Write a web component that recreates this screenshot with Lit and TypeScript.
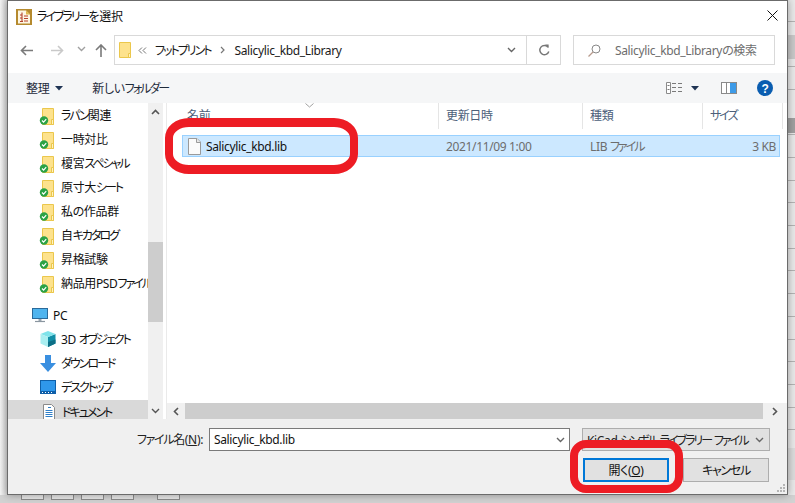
import { LitElement, html, css, svg } from 'lit';
import { customElement } from 'lit/decorators.js';

const folder = (badge = true) => html`
  <svg width="20" height="20" viewBox="0 0 20 20">
    <path d="M3.5 3.5h11v16h-11z" fill="#fde28d" stroke="#ebc74c" />
    <path d="M12.5 14.5h2v5h-2z" fill="#fff2c0" stroke="#ebc74c" />
    ${badge
      ? svg`<circle cx="5" cy="15.500" r="4.200" fill="#2ba245" />
          <path d="M3 15.500l1.600 1.600 2.600-3" fill="none" stroke="#fff" stroke-width="1.200" />`
      : ''}
  </svg>
`;

const chevronDown = (color = '#666') => html`
  <svg width="9" height="6" viewBox="0 0 9 6"><path d="M1 1l3.500 3.500L8 1" fill="none" stroke=${color} stroke-width="1.400" /></svg>
`;

const caret = html`<svg width="8" height="5" viewBox="0 0 8 5"><path d="M0 0h8L4 4.500z" fill="#1f3454" /></svg>`;

// Meiryo/Yu Gothic kana run much narrower than Noto's, so squeeze katakana runs only
const jp = (text: string) =>
  text.split(/([ァ-ヶー]+)/).map((part, i) => (i % 2 ? html`<span class="k">${part}</span>` : part));

const navItems = ['ラパン関連', '一時対比', '榎宮スペシャル', '原寸大シート', '私の作品群', '自キカタログ', '昇格試験', '納品用PSDファイル'];

@customElement('app-root')
export class AppRoot extends LitElement {
  static styles = css`
    :host {
      display: block;
      position: relative;
      width: 795px;
      height: 503px;
      overflow: hidden;
      background: #eeeeee;
      font-family: 'Noto Sans', 'Noto Sans CJK JP', sans-serif;
      font-size: 12px;
      font-feature-settings: 'palt';
      letter-spacing: -0.35px;
      color: #1a1a1a;
    }
    svg { display: block; flex: none; }
    .k { letter-spacing: -2px; }
    .label .k, .btn .k { letter-spacing: -1.3px; }

    .desk { display: flex; height: 495px; }
    .left-strip { width: 7px; background: linear-gradient(90deg, #f4f4f4, #d4d4d4); }
    .right-strip {
      flex: 1;
      background:
        linear-gradient(#a0a0a0, #a0a0a0) 0 118px / 100% 15px no-repeat,
        linear-gradient(#c9c9c9, #c9c9c9) 0 35px / 100% 24px no-repeat,
        linear-gradient(#dcdcdc, #dcdcdc) 0 448px / 100% 32px no-repeat,
        repeating-linear-gradient(#e9e9e9 0 21.7px, #b4b4b4 21.7px 22.7px) 0 -1px;
    }
    .under { display: flex; height: 8px; padding-left: 21px; gap: 7px; background: #d2d2d2; }
    .stub { width: 21px; height: 4px; border: 1px solid #8c8c8c; border-top: 0; background: #e9e9e9; }
    .stub.far { margin-left: 16px; }

    .dialog {
      box-sizing: border-box;
      width: 781px;
      height: 495px;
      border: 1px solid #6b6b6b;
      background: #fff;
      display: flex;
      flex-direction: column;
      box-shadow: 0 0 8px rgba(0, 0, 0, 0.35);
      position: relative;
    }

    .title { height: 32px; display: flex; align-items: center; padding-left: 8px; gap: 5px; flex: none; }
    .title-text { flex: 1; color: #111; position: relative; top: -1px; }
    .close { margin-right: 9px; position: relative; top: -2px; }

    .nav { height: 40px; display: flex; align-items: center; flex: none; padding-left: 12px; }
    .nav .fwd { margin-left: 18px; }
    .nav .hist { margin-left: 13px; margin-top: -8px; }
    .nav .up { margin-left: 9px; }
    .nav .lift { margin-top: -6px; }
    .address {
      margin-left: 7px;
      width: 447px;
      height: 30px;
      box-sizing: border-box;
      border: 1px solid #d9d9d9;
      display: flex;
      align-items: center;
      margin-top: -6px;
    }
    .address .fold { margin-left: 1px; }
    .crumb-sep { margin-left: 6px; }
    .crumb { margin-left: 8px; }
    .gt { margin: 0 9px 0 10px; }
    .gt + .crumb { margin-left: 0; }
    .addr-end { margin-left: auto; display: flex; align-items: center; height: 100%; }
    .addr-end .refresh {
      width: 33px;
      height: 100%;
      border-left: 1px solid #d9d9d9;
      display: flex;
      align-items: center;
      justify-content: center;
      margin-left: 10px;
    }
    .search {
      margin-left: 12px;
      margin-top: -6px;
      width: 202px;
      height: 30px;
      box-sizing: border-box;
      border: 1px solid #d9d9d9;
      display: flex;
      align-items: center;
      padding-left: 14px;
      gap: 14px;
      color: #6d6d6d;
    }

    .toolbar {
      height: 30px;
      flex: none;
      background: #f5f6f7;
      display: flex;
      align-items: center;
      padding-left: 18px;
      color: #1e2a3a;
    }
    .toolbar .org { display: flex; align-items: center; gap: 6px; }
    .toolbar .newf { margin-left: 29px; }
    .tools { margin-left: auto; display: flex; align-items: center; padding-right: 14px; }
    .tools .vc { margin-left: 9px; }
    .tools .pane { margin: 0 20px 0 22px; }

    .body { flex: 1; display: flex; min-height: 0; }
    .tree { width: 140px; overflow: hidden; flex: none; }
    .tree-row { height: 24px; display: flex; align-items: center; padding-left: 31px; gap: 2px; white-space: nowrap; overflow: hidden; color: #111; }
    .tree-row.gap { margin-top: 8px; }
    .tree-row.pc { padding-left: 24px; gap: 5px; }
    .tree-row.sys { padding-left: 32px; gap: 5px; }
    .tree-row.sel { background: #d9d9d9; margin-top: 1px; padding-left: 35px; gap: 7px; }
    .vbar {
      width: 15px;
      flex: none;
      background: #f0f0f0;
      display: flex;
      flex-direction: column;
      align-items: center;
    }
    .vbar .arr { height: 17px; display: flex; align-items: center; justify-content: center; }
    .vbar .space { height: 122px; }
    .vbar .thumb { width: 100%; height: 80px; background: #cdcdcd; }
    .vbar .rest { flex: 1; }

    .main { flex: 1; display: flex; flex-direction: column; margin-left: 3px; border-left: 1px solid #eaeaea; min-width: 0; }
    .head { height: 26px; display: grid; grid-template-columns: 272px 144px 120px 80px; flex: none; color: #4c607a; }
    .head > div { border-right: 1px solid #e5e5e5; padding: 3px 0 0 7px; position: relative; }
    .head > div:first-child { padding-left: 20px; }
    .sort { position: absolute; left: 138px; top: 0; }
    .list { flex: 1; padding: 6px 0 0 15px; }
    .file {
      width: 598px;
      height: 22px;
      box-sizing: border-box;
      border: 1px solid #99d1ff;
      background: #cce8ff;
      display: grid;
      grid-template-columns: 256px 144px 120px 76px;
      align-items: center;
      color: #6d6d6d;
    }
    .file .name { display: flex; align-items: center; gap: 5px; padding-left: 5px; color: #111; }
    .file .date { padding-left: 7px; }
    .file .kind { padding-left: 7px; }
    .file .size { text-align: right; padding-right: 3px; }

    .hbar { height: 16px; flex: none; display: flex; align-items: center; background: #f0f0f0; }
    .hbar .arr { width: 18px; display: flex; justify-content: center; }
    .hbar .thumb { width: 578px; height: 100%; background: #cdcdcd; }
    .hbar .end { flex: 1; display: flex; justify-content: center; }

    .bottom {
      height: 75px;
      flex: none;
      background: #f0f0f0;
      display: grid;
      grid-template-columns: 201px 361px 12px 188px;
      grid-template-rows: 23px 24px;
      row-gap: 7px;
      padding-top: 9px;
      box-sizing: border-box;
      position: relative;
    }
    .label { text-align: right; padding-right: 6px; line-height: 23px; color: #222; }
    .input {
      grid-column: 2;
      box-sizing: border-box;
      border: 1px solid #7a7a7a;
      background: #fff;
      display: flex;
      align-items: center;
      justify-content: space-between;
      padding: 0 4px;
      color: #111;
    }
    .filter {
      grid-column: 4;
      box-sizing: border-box;
      border: 1px solid #adadad;
      background: #e1e1e1;
      display: flex;
      align-items: center;
      justify-content: space-between;
      padding: 0 5px 0 4px;
      color: #222;
      white-space: nowrap;
    }
    .buttons { grid-column: 2 / 5; grid-row: 2; display: flex; justify-content: flex-end; gap: 14px; padding-right: 1px; }
    .btn {
      width: 86px;
      box-sizing: border-box;
      border: 1px solid #adadad;
      background: #e1e1e1;
      display: flex;
      align-items: center;
      justify-content: center;
      color: #111;
    }
    .btn.primary { border: 2px solid #0078d7; }
    u { text-underline-offset: 1px; }
    .grip { position: absolute; right: 1px; bottom: 1px; }

    .mark { position: absolute; box-sizing: border-box; border-style: solid; border-color: #ed1c24; }
    .mark.file-mark { left: 165px; top: 118px; width: 193px; height: 56px; border-width: 9px 8px; border-radius: 24px / 20px; }
    .mark.open-mark { left: 570px; top: 440px; width: 113px; height: 53px; border-width: 8px; border-radius: 16px; }
  `;

  render() {
    return html`
      <div class="desk">
        <div class="left-strip"></div>
        <div class="dialog">
          <div class="title">
            <svg width="16" height="16" viewBox="0 0 16 16">
              <rect width="16" height="16" fill="#b58a2e" />
              <path d="M2 1.500h8l4 4v9H2z" fill="#fdf6e3" />
              <path d="M10 1.500l4 4h-4z" fill="#e0b84c" />
              <path d="M6 3.500v9M4 6h2M4 9h2M8 7h4M8 9.500h4M8 12h4M4 12.500h3" stroke="#b5412a" stroke-width="1.100" fill="none" />
            </svg>
            <span class="title-text">${jp('ライブラリーを選択')}</span>
            <svg class="close" width="11" height="11" viewBox="0 0 11 11"><path d="M0.500 0.500l10 10M10.500 0.500l-10 10" stroke="#111" stroke-width="1" /></svg>
          </div>

          <div class="nav">
            <svg class="lift" width="13" height="11" viewBox="0 0 13 11"><path d="M6 1L1.500 5.500 6 10M2 5.500h11" fill="none" stroke="#7a7a7a" stroke-width="1.600" /></svg>
            <svg class="fwd lift" width="13" height="11" viewBox="0 0 13 11"><path d="M7 1l4.500 4.500L7 10M11 5.500H0" fill="none" stroke="#c9c9c9" stroke-width="1.600" /></svg>
            <span class="hist">${chevronDown('#a0a0a0')}</span>
            <svg class="up lift" width="12" height="13" viewBox="0 0 12 13"><path d="M1 6l5-5 5 5M6 1.500V13" fill="none" stroke="#7a7a7a" stroke-width="1.600" /></svg>
            <div class="address">
              <span class="fold">
                <svg width="16" height="20" viewBox="0 0 16 20"><path d="M3.500 2.500h11v15h-11z" fill="#fde28d" stroke="#ebc74c" /><path d="M12.500 13.500h2v4h-2z" fill="#fff2c0" stroke="#ebc74c" /></svg>
              </span>
              <svg class="crumb-sep" width="9" height="7" viewBox="0 0 9 7"><path d="M4 .500L1 3.500l3 3M8 .500l-3 3 3 3" fill="none" stroke="#777" /></svg>
              <span class="crumb">${jp('フットプリント')}</span>
              <svg class="gt" width="5" height="8" viewBox="0 0 5 8"><path d="M1 1l3 3-3 3" fill="none" stroke="#777" stroke-width="1.200" /></svg>
              <span class="crumb">Salicylic_kbd_Library</span>
              <div class="addr-end">
                ${chevronDown('#666')}
                <div class="refresh">
                  <svg width="12" height="13" viewBox="0 0 12 13"><path d="M10 3.200A4.600 4.600 0 1 0 10.800 7.500" fill="none" stroke="#777" stroke-width="1.500" /><path d="M7 0.500h3.600v3.600z" fill="#777" /></svg>
                </div>
              </div>
            </div>
            <div class="search">
              <svg width="13" height="13" viewBox="0 0 13 13"><circle cx="8" cy="5" r="4" fill="none" stroke="#888" /><path d="M5 8l-4.500 4.500" stroke="#b79a8c" stroke-width="1.200" /></svg>
              <span>Salicylic_kbd_Libraryの検索</span>
            </div>
          </div>

          <div class="toolbar">
            <span class="org">整理 ${caret}</span>
            <span class="newf">${jp('新しいフォルダー')}</span>
            <div class="tools">
              <svg width="16" height="12" viewBox="0 0 16 12">
                <path d="M0.500 0.500h4v11h-4z" fill="#fff" stroke="#8a8a8a" />
                <path d="M1.500 3.500h2M1.500 7.500h2M6 1.500h4M12 1.500h4M6 5.500h4M12 5.500h4M6 9.500h4M12 9.500h4" stroke="#7a7a7a" />
              </svg>
              <span class="vc">${caret}</span>
              <svg class="pane" width="16" height="12" viewBox="0 0 16 12">
                <rect x="0.500" y="0.500" width="15" height="11" fill="#fff" stroke="#8a8a8a" />
                <rect x="9" y="1" width="6" height="10" fill="#3d9be8" />
                <path d="M5.500 1v10" stroke="#8a8a8a" />
              </svg>
              <svg width="16" height="16" viewBox="0 0 16 16">
                <circle cx="8" cy="8" r="8" fill="#0a5db0" />
                <text x="8" y="12.500" text-anchor="middle" font-family="Liberation Sans" font-weight="700" font-size="12" fill="#fff">?</text>
              </svg>
            </div>
          </div>

          <div class="body">
            <div class="tree">
              ${navItems.map((n) => html`<div class="tree-row">${folder()}<span>${jp(n)}</span></div>`)}
              <div class="tree-row gap pc">
                <svg width="16" height="15" viewBox="0 0 16 15">
                  <rect x="0.500" y="0.500" width="15" height="10" fill="#4fb4ee" stroke="#2a6a9a" />
                  <path d="M8 11v2" stroke="#9aa6b0" stroke-width="3" />
                  <path d="M3 13.500h10" stroke="#8a96a0" stroke-width="1.200" />
                </svg>
                <span>PC</span>
              </div>
              <div class="tree-row sys">
                <svg width="16" height="16" viewBox="0 0 16 16">
                  <path d="M8 6l7.500-3v9.500L8 16z" fill="#128ea6" />
                  <path d="M8 0l7.500 3L8 6 .5 3z" fill="#7fe3ea" />
                  <path d="M.5 3L8 6v10L.5 12.500z" fill="#a9eef0" />
                  <path d="M8 11l7.500-2.500v4L8 16z" fill="#0c6f86" />
                </svg>
                <span>3D ${jp('オブジェクト')}</span>
              </div>
              <div class="tree-row sys">
                <svg width="16" height="17" viewBox="0 0 16 17"><path d="M5 0h6v8h5l-8 9-8-9h5z" fill="#3a8fe0" /></svg>
                <span>${jp('ダウンロード')}</span>
              </div>
              <div class="tree-row sys">
                <svg width="16" height="14" viewBox="0 0 16 14"><rect width="16" height="14" fill="#0f5fa8" /><rect x="1" y="1" width="14" height="10" fill="#2f97ea" /><path d="M2 12.500h12" stroke="#fff" stroke-dasharray="1 2" /></svg>
                <span>${jp('デスクトップ')}</span>
              </div>
              <div class="tree-row sel">
                <svg width="12" height="16" viewBox="0 0 12 16">
                  <path d="M.5.500h8l3 3v12H.5z" fill="#fff" stroke="#8a8a8a" />
                  <path d="M5 3.500h3M2.500 6.500h7M2.500 8.500h7M2.500 10.500h7M2.500 12.500h7" stroke="#2f7fc8" />
                </svg>
                <span>${jp('ドキュメント')}</span>
              </div>
            </div>
            <div class="vbar">
              <div class="arr"><svg width="9" height="6" viewBox="0 0 9 6"><path d="M1 5l3.500-3.500L8 5" fill="none" stroke="#555" stroke-width="1.600" /></svg></div>
              <div class="space"></div>
              <div class="thumb"></div>
              <div class="rest"></div>
              <div class="arr">${chevronDown('#555')}</div>
            </div>
            <div class="main">
              <div class="head">
                <div>名前<span class="sort"><svg width="9" height="5" viewBox="0 0 9 5"><path d="M.5.500l4 3.500 4-3.500" fill="none" stroke="#a0a0a0" /></svg></span></div>
                <div>更新日時</div>
                <div>種類</div>
                <div>${jp('サイズ')}</div>
              </div>
              <div class="list">
                <div class="file">
                  <div class="name">
                    <svg width="13" height="17" viewBox="0 0 13 17">
                      <path d="M.5.500h8.500l3.500 3.500v12.500H.5z" fill="#fbfbfb" stroke="#9a9a9a" />
                      <path d="M8.500.500v4h4" fill="#e8e8e8" stroke="#9a9a9a" />
                    </svg>
                    <span>Salicylic_kbd.lib</span>
                  </div>
                  <div class="date">2021/11/09 1:00</div>
                  <div class="kind">LIB ${jp('ファイル')}</div>
                  <div class="size">3 KB</div>
                </div>
              </div>
              <div class="hbar">
                <div class="arr"><svg width="6" height="9" viewBox="0 0 6 9"><path d="M5 1L1.500 4.500 5 8" fill="none" stroke="#555" stroke-width="1.600" /></svg></div>
                <div class="thumb"></div>
                <div class="end"><svg width="6" height="9" viewBox="0 0 6 9"><path d="M1 1l3.500 3.500L1 8" fill="none" stroke="#555" stroke-width="1.600" /></svg></div>
              </div>
            </div>
          </div>

          <div class="bottom">
            <div class="label">${jp('ファイル名')}(<u>N</u>):</div>
            <div class="input"><span>Salicylic_kbd.lib</span>${chevronDown('#666')}</div>
            <div class="filter"><span>KiCad ${jp('シンボル')} ${jp('ライブラリー')} ${jp('ファイル')}</span>${chevronDown('#666')}</div>
            <div class="buttons">
              <div class="btn primary"><span>開く(<u>O</u>)</span></div>
              <div class="btn">${jp('キャンセル')}</div>
            </div>
            <svg class="grip" width="10" height="10" viewBox="0 0 10 10" fill="#b5b5b5">
              <rect x="7" y="1" width="2" height="2" /><rect x="4" y="4" width="2" height="2" /><rect x="7" y="4" width="2" height="2" />
              <rect x="1" y="7" width="2" height="2" /><rect x="4" y="7" width="2" height="2" /><rect x="7" y="7" width="2" height="2" />
            </svg>
          </div>
        </div>
        <div class="right-strip"></div>
      </div>
      <div class="under">
        <div class="stub"></div><div class="stub"></div><div class="stub"></div><div class="stub"></div><div class="stub far"></div>
      </div>
      <div class="mark file-mark"></div>
      <div class="mark open-mark"></div>
    `;
  }
}
